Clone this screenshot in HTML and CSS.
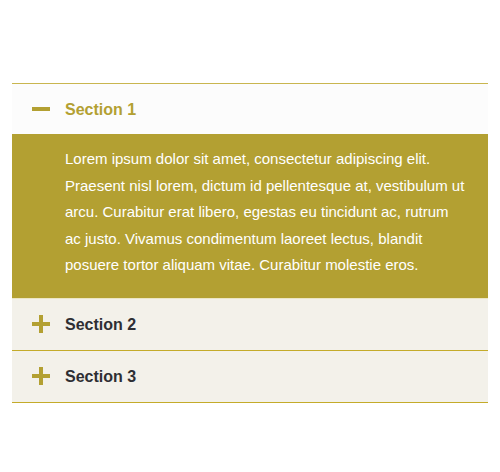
FILE: index.html
```html
<!DOCTYPE html>
<html lang="en">
<head>
    <meta charset="UTF-8">
    <meta name="viewport" content="width=device-width, initial-scale=1.0">
    <title>Accordion</title>
    <link rel="stylesheet" href="styles.css">
</head>
<body>
    <div class="accordion">
        <div class="section open">
            <div class="section-head">
                <span class="icon minus"></span>
                <span class="title">Section 1</span>
            </div>
            <div class="section-body">
                <p>Lorem ipsum dolor sit amet, consectetur adipiscing elit. Praesent nisl lorem, dictum id pellentesque at, vestibulum ut arcu. Curabitur erat libero, egestas eu tincidunt ac, rutrum ac justo. Vivamus condimentum laoreet lectus, blandit posuere tortor aliquam vitae. Curabitur molestie eros.</p>
            </div>
        </div>
        <div class="section">
            <div class="section-head">
                <span class="icon plus"></span>
                <span class="title">Section 2</span>
            </div>
        </div>
        <div class="section">
            <div class="section-head">
                <span class="icon plus"></span>
                <span class="title">Section 3</span>
            </div>
        </div>
    </div>
</body>
</html>
```

FILE: styles.css
```css
/* page */
body {
    margin: 0;
    padding: 83px 12px 0 12px;
    background: #fff;
    font-family: "Liberation Sans", Arial, sans-serif;
}

/* accordion */
.accordion {
    border-top: 1px solid #c9b64f;
}
.section {
    border-bottom: 1px solid #c4ab2a;
}
.section.open {
    border-bottom: none;
}
.section-head {
    height: 51px;
    display: flex;
    align-items: center;
    padding-left: 20px;
    background: #f3f1ea;
}
.section.open .section-head {
    height: 50px;
    background: #fcfcfc;
}
.title {
    font-size: 16px;
    font-weight: bold;
    color: #2e2e33;
    margin-left: 15px;
    margin-top: 2px;
}
.section.open .title {
    color: #b3a032;
}

/* plus / minus icons */
.icon {
    position: relative;
    width: 18px;
    height: 18px;
}
.icon::before,
.icon::after {
    content: "";
    position: absolute;
    background: #b3a032;
}
.icon::before {
    left: 0;
    top: 7px;
    width: 18px;
    height: 4px;
}
.icon.plus::after {
    left: 7px;
    top: 0;
    width: 4px;
    height: 18px;
}

/* body */
.section-body {
    background: #b3a032;
    padding: 12px 22px 19px 53px;
    border-bottom: 1px solid #ece6c4;
}
.section-body p {
    margin: 0;
    color: #fff;
    font-size: 15px;
    line-height: 26.5px;
}
```
